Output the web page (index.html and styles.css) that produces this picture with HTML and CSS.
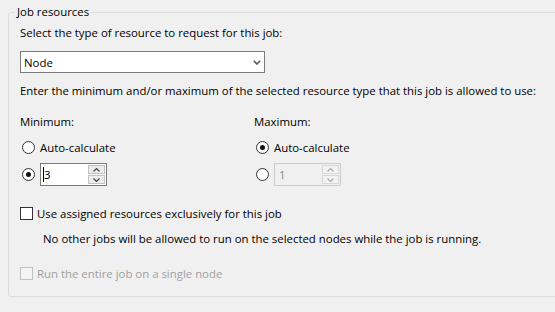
FILE: index.html
```html
<!DOCTYPE html>
<html>
<head>
<meta charset="utf-8">
<link rel="stylesheet" href="styles.css">
</head>
<body>
<fieldset class="group">
  <legend class="group-title">Job resources</legend>
  <p class="line">Select the type of resource to request for this job:</p>
  <div class="select">
    <span>Node</span>
    <svg class="select-arrow" width="8" height="5" viewBox="0 0 8 5"><path d="M0.8 0.8 L4 4 L7.2 0.8" fill="none" stroke="#5a5a5a" stroke-width="1.6"/></svg>
  </div>
  <p class="line enter">Enter the minimum and/or maximum of the selected resource type that this job is allowed to use:</p>
  <div class="limits">
    <div class="col">
      <div class="line">Minimum:</div>
      <div class="opt"><span class="radio"></span><span>Auto-calculate</span></div>
      <div class="opt spin-row">
        <span class="radio on"></span>
        <div class="spin">
          <span class="val"><span class="caret"></span>3</span>
          <div class="btns">
            <span class="btn"><svg width="7" height="4" viewBox="0 0 7 4"><path d="M0.5 3.5 L3.5 0.5 L6.5 3.5" fill="none" stroke="currentColor" stroke-width="1.1"/></svg></span>
            <span class="btn"><svg width="7" height="4" viewBox="0 0 7 4"><path d="M0.5 0.5 L3.5 3.5 L6.5 0.5" fill="none" stroke="currentColor" stroke-width="1.1"/></svg></span>
          </div>
        </div>
      </div>
    </div>
    <div class="col">
      <div class="line">Maximum:</div>
      <div class="opt"><span class="radio on"></span><span>Auto-calculate</span></div>
      <div class="opt spin-row">
        <span class="radio"></span>
        <div class="spin disabled">
          <span class="val">1</span>
          <div class="btns">
            <span class="btn"><svg width="7" height="4" viewBox="0 0 7 4"><path d="M0.5 3.5 L3.5 0.5 L6.5 3.5" fill="none" stroke="currentColor" stroke-width="1.1"/></svg></span>
            <span class="btn"><svg width="7" height="4" viewBox="0 0 7 4"><path d="M0.5 0.5 L3.5 3.5 L6.5 0.5" fill="none" stroke="currentColor" stroke-width="1.1"/></svg></span>
          </div>
        </div>
      </div>
    </div>
  </div>
  <div class="check-row"><span class="check"></span><span>Use assigned resources exclusively for this job</span></div>
  <p class="line note">No other jobs will be allowed to run on the selected nodes while the job is running.</p>
  <div class="check-row disabled"><span class="check"></span><span>Run the entire job on a single node</span></div>
</fieldset>
</body>
</html>
```

FILE: styles.css
```css
html, body {
  margin: 0;
  padding: 0;
  background: #f0f0f0;
  overflow: hidden;
}
body {
  font-family: "Open Sans", "Noto Sans", sans-serif;
  font-size: 11.4px;
  color: #000;
  width: 555px;
  height: 312px;
}
.group {
  margin: 4px 0 0 8px;
  padding: 5px 11px 15px 11px;
  border: 1px solid #dcdcdc;
  border-radius: 3px;
  width: 560px;
  box-sizing: border-box;
  min-width: 0;
}
.group-title {
  padding: 0 2px;
  margin-left: -5px;
  line-height: 16px;
  height: 16px;
}
.line {
  margin: 0;
  line-height: 16px;
  height: 16px;
  white-space: nowrap;
}
.select {
  margin-top: 10px;
  width: 245px;
  height: 22px;
  box-sizing: border-box;
  border: 1px solid #7a7a7a;
  background: #fff;
  display: flex;
  align-items: center;
  justify-content: space-between;
  padding: 0 3px 0 3px;
}
.select-arrow {
  display: block;
}
.enter {
  margin-top: 10px;
}
.limits {
  margin-top: 15px;
  display: grid;
  grid-template-columns: 234px 1fr;
}
.opt {
  margin-top: 9px;
  display: flex;
  align-items: center;
  gap: 5px;
  height: 16px;
  white-space: nowrap;
}
.radio {
  width: 13px;
  height: 13px;
  box-sizing: border-box;
  border: 1px solid #333;
  border-radius: 50%;
  background: #fff;
  margin-left: 2px;
  flex: none;
  display: flex;
  align-items: center;
  justify-content: center;
}
.radio.on::after {
  content: "";
  width: 5px;
  height: 5px;
  border-radius: 50%;
  background: #111;
}
.spin-row {
  margin-top: 8px;
  height: 23px;
}
.spin {
  width: 67px;
  height: 23px;
  box-sizing: border-box;
  border: 1px solid #7a7a7a;
  background: #fff;
  display: flex;
  justify-content: space-between;
  align-items: stretch;
}
.val {
  display: flex;
  align-items: center;
  padding-left: 2px;
}
.caret {
  width: 1px;
  height: 15px;
  background: #000;
}
.btns {
  width: 17px;
  display: flex;
  flex-direction: column;
  gap: 1px;
  padding: 1px;
  color: #404040;
}
.btn {
  flex: 1;
  border: 1px solid #c2c2c2;
  background: #ececec;
  display: flex;
  align-items: center;
  justify-content: center;
}
.btn svg {
  display: block;
}
.spin.disabled {
  border-color: #cccccc;
  background: #f0f0f0;
  color: #8a8a8a;
}
.spin.disabled .val {
  padding-left: 4px;
}
.spin.disabled .btns {
  color: #a8a8a8;
}
.spin.disabled .btn {
  border-color: #d8d8d8;
  background: #f2f2f2;
}
.check-row {
  margin-top: 19px;
  display: flex;
  align-items: center;
  gap: 4px;
  height: 16px;
  white-space: nowrap;
}
.check {
  width: 13px;
  height: 13px;
  box-sizing: border-box;
  border: 1px solid #333;
  background: #fff;
  flex: none;
}
.note {
  margin-top: 10px;
  padding-left: 23px;
}
.check-row.disabled {
  margin-top: 18px;
  color: #a0a0a0;
}
.check-row.disabled .check {
  border-color: #c0c0c0;
  background: #f4f4f4;
}
```
